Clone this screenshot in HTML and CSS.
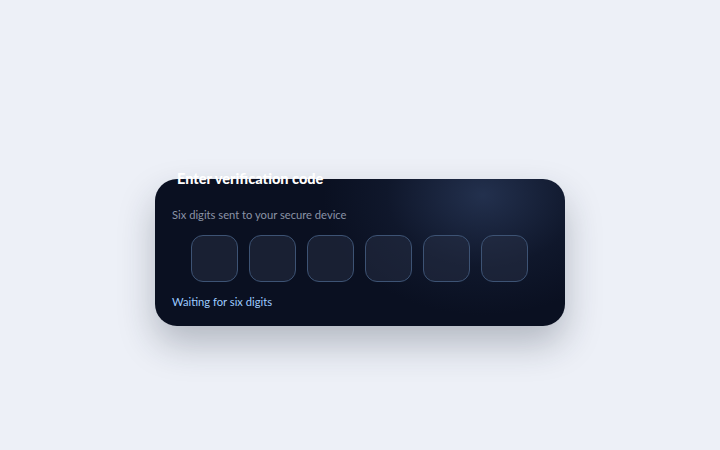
FILE: index.html
```html
<!DOCTYPE html>
<html lang="en">
<head>
<meta charset="utf-8">
<title>Verification</title>
<link rel="stylesheet" href="styles.css">
</head>
<body>
<div class="card">
  <h1 class="title">Enter verification code</h1>
  <p class="subtitle">Six digits sent to your secure device</p>
  <div class="digits">
    <div class="digit"></div>
    <div class="digit"></div>
    <div class="digit"></div>
    <div class="digit"></div>
    <div class="digit"></div>
    <div class="digit"></div>
  </div>
  <p class="status">Waiting for six digits</p>
</div>
</body>
</html>
```
FILE: styles.css
```css
html, body {
  margin: 0;
  padding: 0;
  background: #edf0f7;
  width: 720px;
  height: 450px;
  overflow: hidden;
  font-family: Lato, "Noto Sans", sans-serif;
}
body {
  display: flex;
  justify-content: center;
  align-items: flex-start;
  padding-top: 179px;
  box-sizing: border-box;
}
.card {
  width: 410px;
  height: 147px;
  box-sizing: border-box;
  padding: 0 18px 0 17px;
  border-radius: 22px;
  background:
    radial-gradient(ellipse 160px 120px at 328px 16px, rgba(36,50,80,0.95), rgba(22,32,56,0.45) 60%, rgba(11,17,34,0) 100%),
    #0a1021;
  box-shadow: 0 18px 36px rgba(30,41,59,0.28);
}
.title {
  margin: -9px 0 0 5px;
  font-size: 14.5px;
  line-height: 18px;
  font-weight: 900;
  color: #ffffff;
}
.subtitle {
  margin: 19px 0 0 0;
  font-size: 11.2px;
  line-height: 16px;
  color: #8a93a6;
}
.digits {
  display: flex;
  justify-content: center;
  gap: 11px;
  margin-top: 12px;
}
.digit {
  width: 47px;
  height: 47px;
  box-sizing: border-box;
  border: 1px solid #3d5374;
  border-radius: 12px;
  background: rgba(40,48,70,0.5);
}
.status {
  margin: 12px 0 0 0;
  font-size: 11.2px;
  line-height: 16px;
  color: #9ccbff;
}
```
